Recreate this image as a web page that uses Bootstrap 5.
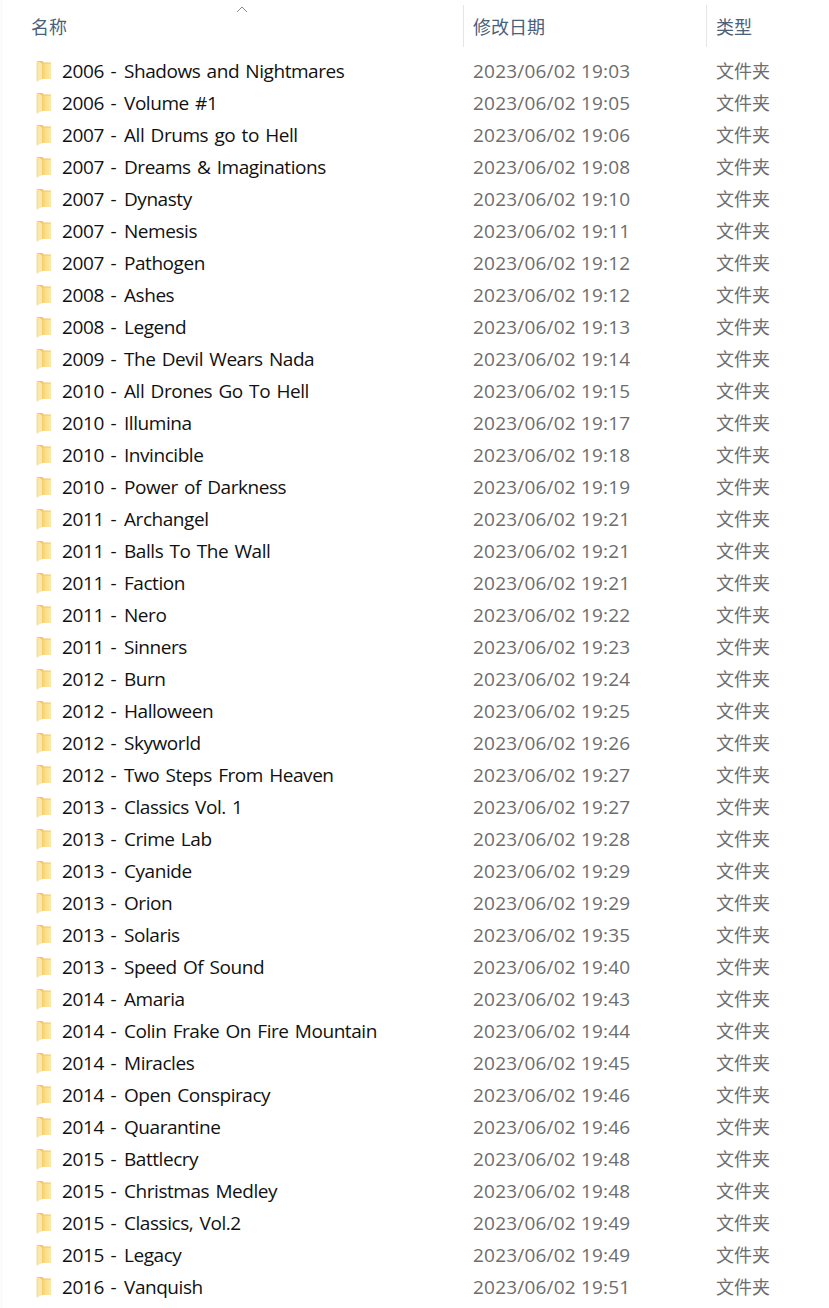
<!DOCTYPE html>
<html lang="zh-CN">
<head>
  <meta charset="UTF-8">
  <title>文件列表</title>
  <link href="https://cdn.jsdelivr.net/npm/bootstrap@5.3.0/dist/css/bootstrap.min.css" rel="stylesheet">
  <script src="https://cdn.jsdelivr.net/npm/bootstrap@5.3.0/dist/js/bootstrap.bundle.min.js"></script>
  <style>
    body { background: #fff; overflow: hidden; font-family: "Open Sans", "Noto Sans CJK SC", sans-serif; }
    .explorer { width: 829px; height: 1308px; overflow: hidden; padding-left: 4px; box-shadow: inset 3px 0 0 #fbfbfb; }
    .head-row { height: 55px; padding-top: 5px; font-size: 18px; color: #4c607a; font-family: "Noto Sans CJK SC", sans-serif; }
    .head-cell { height: 42px; line-height: 42px; }
    .head-name { width: 459px; padding-left: 27px; position: relative; }
    .head-date { width: 243px; padding-left: 9px; border-left: 1px solid #e5e5e5; }
    .head-type { padding-left: 9px; border-left: 1px solid #e5e5e5; }
    .sort-caret { position: absolute; left: 232px; top: 1px; }
    .file-row { height: 32px; line-height: 32px; font-size: 19px; white-space: nowrap; }
    .file-name { width: 469px; padding-left: 31px; color: #111; gap: 10px; letter-spacing: -.45px; word-spacing: 1.8px; }
    .year-part { margin-right: 1.5px; letter-spacing: -.35px; }
    .file-date { width: 243px; color: #6d6d6d; letter-spacing: .2px; }
    .file-type { color: #6d6d6d; font-family: "Noto Sans CJK SC", sans-serif; font-size: 18px; line-height: 30px; }
    .folder-icon { width: 17px; height: 22px; flex: none; }
  </style>
</head>
<body>
  <svg width="0" height="0" class="d-block">
    <defs>
      <linearGradient id="folderFill" x1="0" y1="0" x2="1" y2="0">
        <stop offset="0" stop-color="#f4cd68"/>
        <stop offset=".35" stop-color="#fbdc85"/>
        <stop offset="1" stop-color="#fee9a8"/>
      </linearGradient>
      <symbol id="folder" viewBox="0 0 17 22">
        <path d="M2 1h5.500l1.500 1.500h7V19H2z" fill="#f1c85f"/>
        <path d="M7 3.500h9V19H7z" fill="url(#folderFill)"/>
        <path d="M2 1l5 2.500V19l-5 2.500z" fill="#fbe7ad"/>
        <path d="M2 1v20.500" stroke="#e6c26c" stroke-width=".6" fill="none"/>
      </symbol>
    </defs>
  </svg>
  <div class="explorer">
    <div class="head-row d-flex">
      <div class="head-cell head-name">名称
        <svg class="sort-caret" width="12" height="7" viewBox="0 0 12 7"><path d="M1 6 6 1l5 5" fill="none" stroke="#8a8a8a" stroke-width="1"/></svg>
      </div>
      <div class="head-cell head-date">修改日期</div>
      <div class="head-cell head-type">类型</div>
    </div>
    <div class="file-list">
      <div class="file-row d-flex"><div class="file-name d-flex align-items-center"><svg class="folder-icon"><use href="#folder"/></svg><span><span class="year-part">2006 -</span> Shadows and Nightmares</span></div><div class="file-date">2023/06/02 19:03</div><div class="file-type">文件夹</div></div>
      <div class="file-row d-flex"><div class="file-name d-flex align-items-center"><svg class="folder-icon"><use href="#folder"/></svg><span><span class="year-part">2006 -</span> Volume #1</span></div><div class="file-date">2023/06/02 19:05</div><div class="file-type">文件夹</div></div>
      <div class="file-row d-flex"><div class="file-name d-flex align-items-center"><svg class="folder-icon"><use href="#folder"/></svg><span><span class="year-part">2007 -</span> All Drums go to Hell</span></div><div class="file-date">2023/06/02 19:06</div><div class="file-type">文件夹</div></div>
      <div class="file-row d-flex"><div class="file-name d-flex align-items-center"><svg class="folder-icon"><use href="#folder"/></svg><span><span class="year-part">2007 -</span> Dreams &amp; Imaginations</span></div><div class="file-date">2023/06/02 19:08</div><div class="file-type">文件夹</div></div>
      <div class="file-row d-flex"><div class="file-name d-flex align-items-center"><svg class="folder-icon"><use href="#folder"/></svg><span><span class="year-part">2007 -</span> Dynasty</span></div><div class="file-date">2023/06/02 19:10</div><div class="file-type">文件夹</div></div>
      <div class="file-row d-flex"><div class="file-name d-flex align-items-center"><svg class="folder-icon"><use href="#folder"/></svg><span><span class="year-part">2007 -</span> Nemesis</span></div><div class="file-date">2023/06/02 19:11</div><div class="file-type">文件夹</div></div>
      <div class="file-row d-flex"><div class="file-name d-flex align-items-center"><svg class="folder-icon"><use href="#folder"/></svg><span><span class="year-part">2007 -</span> Pathogen</span></div><div class="file-date">2023/06/02 19:12</div><div class="file-type">文件夹</div></div>
      <div class="file-row d-flex"><div class="file-name d-flex align-items-center"><svg class="folder-icon"><use href="#folder"/></svg><span><span class="year-part">2008 -</span> Ashes</span></div><div class="file-date">2023/06/02 19:12</div><div class="file-type">文件夹</div></div>
      <div class="file-row d-flex"><div class="file-name d-flex align-items-center"><svg class="folder-icon"><use href="#folder"/></svg><span><span class="year-part">2008 -</span> Legend</span></div><div class="file-date">2023/06/02 19:13</div><div class="file-type">文件夹</div></div>
      <div class="file-row d-flex"><div class="file-name d-flex align-items-center"><svg class="folder-icon"><use href="#folder"/></svg><span><span class="year-part">2009 -</span> The Devil Wears Nada</span></div><div class="file-date">2023/06/02 19:14</div><div class="file-type">文件夹</div></div>
      <div class="file-row d-flex"><div class="file-name d-flex align-items-center"><svg class="folder-icon"><use href="#folder"/></svg><span><span class="year-part">2010 -</span> All Drones Go To Hell</span></div><div class="file-date">2023/06/02 19:15</div><div class="file-type">文件夹</div></div>
      <div class="file-row d-flex"><div class="file-name d-flex align-items-center"><svg class="folder-icon"><use href="#folder"/></svg><span><span class="year-part">2010 -</span> Illumina</span></div><div class="file-date">2023/06/02 19:17</div><div class="file-type">文件夹</div></div>
      <div class="file-row d-flex"><div class="file-name d-flex align-items-center"><svg class="folder-icon"><use href="#folder"/></svg><span><span class="year-part">2010 -</span> Invincible</span></div><div class="file-date">2023/06/02 19:18</div><div class="file-type">文件夹</div></div>
      <div class="file-row d-flex"><div class="file-name d-flex align-items-center"><svg class="folder-icon"><use href="#folder"/></svg><span><span class="year-part">2010 -</span> Power of Darkness</span></div><div class="file-date">2023/06/02 19:19</div><div class="file-type">文件夹</div></div>
      <div class="file-row d-flex"><div class="file-name d-flex align-items-center"><svg class="folder-icon"><use href="#folder"/></svg><span><span class="year-part">2011 -</span> Archangel</span></div><div class="file-date">2023/06/02 19:21</div><div class="file-type">文件夹</div></div>
      <div class="file-row d-flex"><div class="file-name d-flex align-items-center"><svg class="folder-icon"><use href="#folder"/></svg><span><span class="year-part">2011 -</span> Balls To The Wall</span></div><div class="file-date">2023/06/02 19:21</div><div class="file-type">文件夹</div></div>
      <div class="file-row d-flex"><div class="file-name d-flex align-items-center"><svg class="folder-icon"><use href="#folder"/></svg><span><span class="year-part">2011 -</span> Faction</span></div><div class="file-date">2023/06/02 19:21</div><div class="file-type">文件夹</div></div>
      <div class="file-row d-flex"><div class="file-name d-flex align-items-center"><svg class="folder-icon"><use href="#folder"/></svg><span><span class="year-part">2011 -</span> Nero</span></div><div class="file-date">2023/06/02 19:22</div><div class="file-type">文件夹</div></div>
      <div class="file-row d-flex"><div class="file-name d-flex align-items-center"><svg class="folder-icon"><use href="#folder"/></svg><span><span class="year-part">2011 -</span> Sinners</span></div><div class="file-date">2023/06/02 19:23</div><div class="file-type">文件夹</div></div>
      <div class="file-row d-flex"><div class="file-name d-flex align-items-center"><svg class="folder-icon"><use href="#folder"/></svg><span><span class="year-part">2012 -</span> Burn</span></div><div class="file-date">2023/06/02 19:24</div><div class="file-type">文件夹</div></div>
      <div class="file-row d-flex"><div class="file-name d-flex align-items-center"><svg class="folder-icon"><use href="#folder"/></svg><span><span class="year-part">2012 -</span> Halloween</span></div><div class="file-date">2023/06/02 19:25</div><div class="file-type">文件夹</div></div>
      <div class="file-row d-flex"><div class="file-name d-flex align-items-center"><svg class="folder-icon"><use href="#folder"/></svg><span><span class="year-part">2012 -</span> Skyworld</span></div><div class="file-date">2023/06/02 19:26</div><div class="file-type">文件夹</div></div>
      <div class="file-row d-flex"><div class="file-name d-flex align-items-center"><svg class="folder-icon"><use href="#folder"/></svg><span><span class="year-part">2012 -</span> Two Steps From Heaven</span></div><div class="file-date">2023/06/02 19:27</div><div class="file-type">文件夹</div></div>
      <div class="file-row d-flex"><div class="file-name d-flex align-items-center"><svg class="folder-icon"><use href="#folder"/></svg><span><span class="year-part">2013 -</span> Classics Vol. 1</span></div><div class="file-date">2023/06/02 19:27</div><div class="file-type">文件夹</div></div>
      <div class="file-row d-flex"><div class="file-name d-flex align-items-center"><svg class="folder-icon"><use href="#folder"/></svg><span><span class="year-part">2013 -</span> Crime Lab</span></div><div class="file-date">2023/06/02 19:28</div><div class="file-type">文件夹</div></div>
      <div class="file-row d-flex"><div class="file-name d-flex align-items-center"><svg class="folder-icon"><use href="#folder"/></svg><span><span class="year-part">2013 -</span> Cyanide</span></div><div class="file-date">2023/06/02 19:29</div><div class="file-type">文件夹</div></div>
      <div class="file-row d-flex"><div class="file-name d-flex align-items-center"><svg class="folder-icon"><use href="#folder"/></svg><span><span class="year-part">2013 -</span> Orion</span></div><div class="file-date">2023/06/02 19:29</div><div class="file-type">文件夹</div></div>
      <div class="file-row d-flex"><div class="file-name d-flex align-items-center"><svg class="folder-icon"><use href="#folder"/></svg><span><span class="year-part">2013 -</span> Solaris</span></div><div class="file-date">2023/06/02 19:35</div><div class="file-type">文件夹</div></div>
      <div class="file-row d-flex"><div class="file-name d-flex align-items-center"><svg class="folder-icon"><use href="#folder"/></svg><span><span class="year-part">2013 -</span> Speed Of Sound</span></div><div class="file-date">2023/06/02 19:40</div><div class="file-type">文件夹</div></div>
      <div class="file-row d-flex"><div class="file-name d-flex align-items-center"><svg class="folder-icon"><use href="#folder"/></svg><span><span class="year-part">2014 -</span> Amaria</span></div><div class="file-date">2023/06/02 19:43</div><div class="file-type">文件夹</div></div>
      <div class="file-row d-flex"><div class="file-name d-flex align-items-center"><svg class="folder-icon"><use href="#folder"/></svg><span><span class="year-part">2014 -</span> Colin Frake On Fire Mountain</span></div><div class="file-date">2023/06/02 19:44</div><div class="file-type">文件夹</div></div>
      <div class="file-row d-flex"><div class="file-name d-flex align-items-center"><svg class="folder-icon"><use href="#folder"/></svg><span><span class="year-part">2014 -</span> Miracles</span></div><div class="file-date">2023/06/02 19:45</div><div class="file-type">文件夹</div></div>
      <div class="file-row d-flex"><div class="file-name d-flex align-items-center"><svg class="folder-icon"><use href="#folder"/></svg><span><span class="year-part">2014 -</span> Open Conspiracy</span></div><div class="file-date">2023/06/02 19:46</div><div class="file-type">文件夹</div></div>
      <div class="file-row d-flex"><div class="file-name d-flex align-items-center"><svg class="folder-icon"><use href="#folder"/></svg><span><span class="year-part">2014 -</span> Quarantine</span></div><div class="file-date">2023/06/02 19:46</div><div class="file-type">文件夹</div></div>
      <div class="file-row d-flex"><div class="file-name d-flex align-items-center"><svg class="folder-icon"><use href="#folder"/></svg><span><span class="year-part">2015 -</span> Battlecry</span></div><div class="file-date">2023/06/02 19:48</div><div class="file-type">文件夹</div></div>
      <div class="file-row d-flex"><div class="file-name d-flex align-items-center"><svg class="folder-icon"><use href="#folder"/></svg><span><span class="year-part">2015 -</span> Christmas Medley</span></div><div class="file-date">2023/06/02 19:48</div><div class="file-type">文件夹</div></div>
      <div class="file-row d-flex"><div class="file-name d-flex align-items-center"><svg class="folder-icon"><use href="#folder"/></svg><span><span class="year-part">2015 -</span> Classics, Vol.2</span></div><div class="file-date">2023/06/02 19:49</div><div class="file-type">文件夹</div></div>
      <div class="file-row d-flex"><div class="file-name d-flex align-items-center"><svg class="folder-icon"><use href="#folder"/></svg><span><span class="year-part">2015 -</span> Legacy</span></div><div class="file-date">2023/06/02 19:49</div><div class="file-type">文件夹</div></div>
      <div class="file-row d-flex"><div class="file-name d-flex align-items-center"><svg class="folder-icon"><use href="#folder"/></svg><span><span class="year-part">2016 -</span> Vanquish</span></div><div class="file-date">2023/06/02 19:51</div><div class="file-type">文件夹</div></div>
    </div>
  </div>
</body>
</html>
